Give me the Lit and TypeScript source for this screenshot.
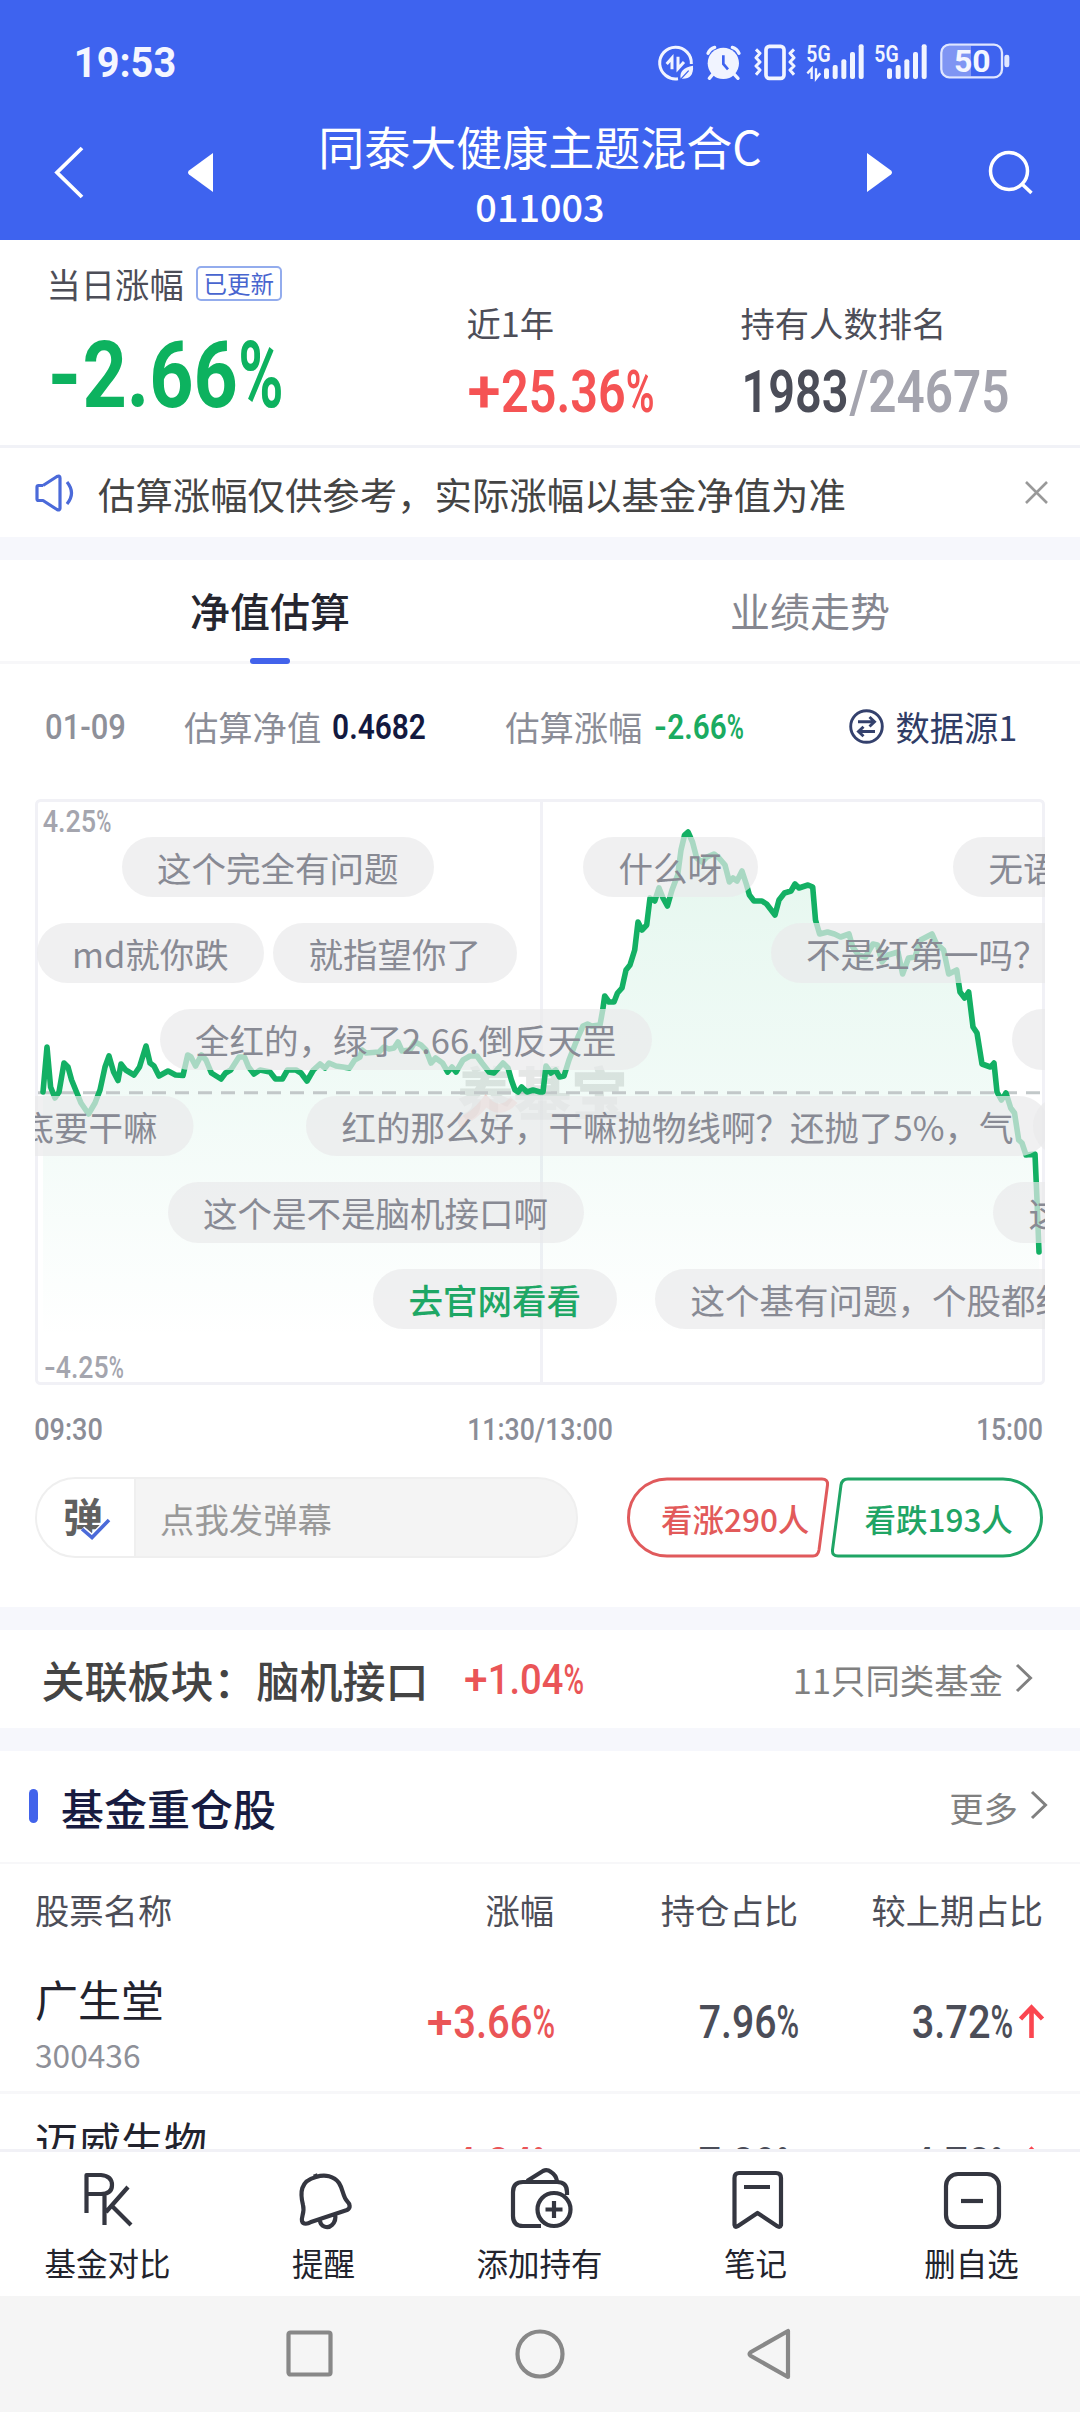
import { LitElement, html, svg, css } from "lit";
import { customElement } from "lit/decorators.js";

interface Run { s: string; x: number; w: number }

/** Splits a figure into sign, digits and percent mark, each fitted to its own share of the width. */
const runs = (text: string, w: number, cap: number): Run[] => {
  const sign = /^[+-]/.test(text) ? text[0] : "";
  const pct = text.endsWith("%") ? "%" : "";
  const signW = sign === "+" ? cap * 0.71 : sign ? cap * 0.44 : 0;
  const pctW = pct ? cap * 0.61 : 0;
  const bodyX = sign ? signW + cap * 0.09 : 0;
  const bodyW = w - bodyX - (pct ? pctW + cap * 0.08 : 0);
  const body = text.slice(sign.length, text.length - pct.length);
  const bear = cap * 0.038;
  const out: Run[] = [];
  if (sign) out.push({ s: sign, x: -bear, w: signW + bear * 2 });
  out.push({ s: body, x: bodyX - bear, w: bodyW + bear * 2 });
  if (pct) out.push({ s: pct, x: w - pctW - bear, w: pctW + bear * 2 });
  return out;
};

const figure = (text: string, x: number, y: number, w: number, cap: number, color: string, weight: number) => svg`<text y=${y} font-size=${cap / 0.711} font-weight=${weight} fill=${color}>${runs(text, w, cap).map((r) => svg`<tspan x=${x + r.x} textLength=${r.w} lengthAdjust="spacingAndGlyphs">${r.s}</tspan>`)}</text>`;

const num = (text: string, w: number, cap: number, color: string, weight = 500, cls = "") => html`
  <svg class="num ${cls}" width=${w} height=${cap} viewBox="0 0 ${w} ${cap}">${figure(text, 0, cap, w, cap, color, weight)}</svg>`;

const LINE: number[][] = [
  [43,1092],[47,1047],[50.6,1087],[55,1098],[59,1092],[64,1063],[68,1067],[71.6,1080],[76.5,1092],[81,1103],[88.5,1114],[95,1103],[100,1090],[105,1067],[109,1056],[113.6,1072],[118,1080.5],[121,1064],[125.7,1070],[134,1075],[139.5,1067],[146,1046],[150,1063],[154,1066],[159,1076],[168,1071],[175.6,1075],[183,1075.5],[187.7,1055],[191,1057],[195.6,1066],[201.4,1055],[206,1060],[211.4,1073],[221,1079],[225.5,1073],[230.7,1070],[239,1057],[244.5,1057],[248.6,1067],[254,1074],[260,1070],[270,1072],[275.5,1079],[282.4,1079],[287.5,1070],[296,1070],[301,1073],[307,1081],[313.4,1070],[320,1064],[325,1068],[329,1063],[336,1066],[349.5,1068],[354.7,1060],[360,1057],[362,1050],[366,1053],[379,1052],[384,1047],[389,1049],[394,1048],[398,1042],[402,1051],[410,1050],[415,1042],[421,1045],[426,1050],[431,1063],[435.6,1058],[442.5,1063],[447.7,1072],[452,1067],[456,1072],[463,1060],[470,1056],[477,1056],[482,1063],[489,1072],[494,1073],[503,1063],[508,1068],[511.4,1080],[515,1090],[518,1092],[521.7,1087],[527,1092],[533,1090],[540,1092],
  [543,1092],[546,1066],[551,1073],[555.5,1070],[559.6,1077],[564,1076],[569,1060],[578,1037],[583,1026],[587.5,1024],[591.6,1026],[600,1025],[602.7,1010],[604.7,996],[609,1002],[614,1002],[617.5,993],[622,988],[626,970],[630,965],[634.7,950],[638,922],[642,930],[646.7,925],[650,898],[654.7,901],[659,888],[663,898],[667.4,906],[672,890],[677.7,875],[681,850],[684.6,835],[688,832],[692.5,842],[696.7,858],[702,862],[707,857],[714,854],[719,858],[725,865],[729.4,882],[733,878],[737,881],[742,871],[746.6,885],[749.4,895],[754,901],[762,901],[766.6,904],[775,915],[779,900],[784.5,893],[791,891],[795,884],[799,888],[808,885],[812.7,887],[815.5,920],[819.6,934],[827.5,932],[834.4,934],[840.6,937],[849,934],[852.7,947],[858.5,955],[865.4,957],[873,944],[877.5,945],[882,962],[888,955],[898,952],[902.6,974],[908.5,958],[915,957],[920.5,940],[932,934],[936,943],[943.6,950],[948.7,974],[956.7,970],[960,992],[964.6,998],[968.7,992],[973,1027],[977,1033],[982,1064],[990.4,1067],[994,1063],[997,1092],[1001.4,1100],[1006,1093],[1010.7,1108],[1014.5,1113],[1018.7,1140],[1022,1143],[1026,1155],[1035,1154],[1037,1200],[1039,1252],
];
const linePts = LINE.map((p) => p.join(",")).join(" ");

interface Pill { x: number; row: number; text: string; hot?: boolean; end?: boolean }
const PILLS: Pill[] = [
  { x: 121.5, row: 0, text: "这个完全有问题" },
  { x: 583, row: 0, text: "什么呀" },
  { x: 953, row: 0, text: "无语了" },
  { x: 36.5, row: 1, text: "md就你跌" },
  { x: 273, row: 1, text: "就指望你了" },
  { x: 770.5, row: 1, text: "不是红第一吗？" },
  { x: 159.5, row: 2, text: "全红的，绿了2.66.倒反天罡" },
  { x: 1011.5, row: 2, text: "跌" },
  { x: 193, row: 3, text: "到底要干嘛", end: true },
  { x: 306, row: 3, text: "红的那么好，干嘛抛物线啊？还抛了5%，气" },
  { x: 1032.5, row: 3, text: "跌" },
  { x: 167.5, row: 4, text: "这个是不是脑机接口啊" },
  { x: 993, row: 4, text: "这个" },
  { x: 373, row: 5, text: "去官网看看", hot: true },
  { x: 655, row: 5, text: "这个基有问题，个股都红" },
];

const bars = (x: number, tops: number[]) => tops.map((t, i) => svg`<rect x=${x + i * 26} y=${t} width="15" height=${129 - t} rx="6" fill="#f1f4ff"/>`);

const ICONS = {
  pk: svg`<path d="M86.500 2213V2175H101Q112 2176 112 2185Q112 2194 101 2194H86.500M104.500 2195V2225M128 2187L106 2212M112 2206L131 2225"/>`,
  bell: svg`<path d="M316 2177C300 2181 300 2193 303 2205C305 2212 301 2217 302 2221C303 2225 308 2224 311 2222L347 2210C351 2208 350 2204 347 2201C343 2197 343 2189 339 2183C334 2176 325 2174 316 2177ZM316 2177L315 2174M320 2220C320 2227 328 2229 332 2225C335 2222 336 2218 335 2214"/>`,
  wallet: svg`<path d="M541 2226H523Q513 2226 513 2216V2192Q513 2182 523 2182H557Q567 2182 567 2192V2195M527 2181L543 2171Q547 2169 551 2172Q556 2175 557 2181"/><circle cx="554" cy="2209.500" r="16.500"/><path d="M554 2201V2218M545.500 2209.500H562.500"/>`,
  note: svg`<path d="M739 2173H776Q781 2173 781 2178V2225Q780 2228 777 2226L757.500 2213L738 2226Q735 2228 734.500 2225V2178Q734.500 2173 739 2173ZM744 2187H770"/>`,
  minus: svg`<rect x="946" y="2174" width="53" height="53" rx="12"/><path d="M961 2201H983"/>`,
};
const ACTIONS: [keyof typeof ICONS, string, number][] = [
  ["pk", "基金对比", 108], ["bell", "提醒", 324], ["wallet", "添加持有", 540], ["note", "笔记", 756], ["minus", "删自选", 972],
];

const chevron = () => html`<svg width="18" height="28" viewBox="0 0 18 28"><path d="M2 1L15.500 14L2 27" fill="none" stroke="#808080" stroke-width="3"/></svg>`;

const upArrow = html`<svg class="up" width="24" height="33" viewBox="0 0 24 33"><path d="M12.500 33V4M1.500 14L12.500 2.500L23.500 14" fill="none" stroke="#fb4650" stroke-width="4.600"/></svg>`;

@customElement("app-root")
export class AppRoot extends LitElement {
  static styles = css`
    :host { display: block; width: 1080px; height: 2412px; overflow: hidden; background: #fff; font-family: "Noto Sans CJK SC", sans-serif; }
    * { box-sizing: border-box; }
    svg { display: block; flex: none; overflow: visible; }
    .num text { font-family: Roboto, sans-serif; }
    .row { display: flex; align-items: center; }
    .grow { flex: 1; }
    span { white-space: nowrap; }

    .header { background: #3e63ef; height: 240px; color: #fff; }
    .status { height: 120px; padding: 36px 60px 0 75px; display: flex; justify-content: space-between; }
    .status .time { margin-top: 11px; }
    .nav { height: 120px; display: flex; padding-right: 46px; }
    .nav > svg { margin-top: 26px; }
    .nav .back { margin-left: 54px; }
    .nav .prev { margin-left: 104px; }
    .nav .search { margin-left: 96px; }
    .fund { flex: 1; display: flex; flex-direction: column; align-items: center; gap: 16px; }
    .fund .name { font-size: 46px; line-height: 50px; }
    .fund .code { font-size: 37.800px; line-height: 40px; font-weight: 500; }

    .stats { height: 208px; display: grid; grid-template-columns: 420px 274px 1fr; padding-left: 46.500px; border-bottom: 3px solid #f1f2f7; color: #4d4e58; font-size: 34.300px; line-height: 34px; }
    .stat { padding-top: 65px; }
    .stat.main { padding-top: 26px; }
    .stat .num { margin: 31px 0 0 2px; }
    .stat.main .num { margin: 41px 0 0 3.500px; }
    .stat .pair { display: flex; gap: 4px; }
    .stat .pair .num + .num { margin-left: 0; }
    .badge { margin-left: 12px; width: 86px; height: 35px; margin-bottom: -1px; border: 2px solid #93aced; border-radius: 5px; color: #4865cf; font-size: 23.500px; line-height: 30px; text-align: center; }
    .stat.main .row { height: 34px; }

    .notice { height: 89px; padding: 0 32px 0 35px; font-size: 37.400px; color: #444; }
    .notice span { margin-left: 23px; padding-top: 2px; }
    .band { height: 23px; background: #f6f7fc; }

    .tabs { height: 104px; display: grid; grid-template-columns: 1fr 1fr; box-shadow: inset 0 -3px #f7f7f9; }
    .tab { display: flex; flex-direction: column; align-items: center; font-size: 40px; line-height: 96px; padding-top: 2px; color: #85868f; }
    .tab.on { color: #25262f; font-weight: 500; }
    .tab i { width: 40px; height: 6px; border-radius: 3px; background: #4263eb; }

    .info { height: 124px; margin-bottom: 11px; padding-left: 46px; font-size: 34.300px; color: #8b8d97; }
    .info .l1 { margin-left: 59px; }
    .info .n1 { margin-left: 12px; }
    .info .l2 { margin-left: 80px; }
    .info .n2 { margin-left: 13px; }
    .info .swap { margin-left: 106px; }
    .info .src { margin-left: 11px; color: #2f3c66; }

    .chart { position: relative; margin: 0 35px; width: 1010px; height: 586px; overflow: hidden; }
    .chart text { font-family: Roboto, sans-serif; }
    .chart .mark { font-family: "Noto Sans CJK SC", sans-serif; font-weight: 900; }
    .pill { position: absolute; height: 60.500px; line-height: 61.500px; padding: 0 35.500px; border-radius: 31px; background: rgba(234, 234, 235, 0.7); color: #888a94; font-size: 34.500px; white-space: nowrap; }
    .pill.end { transform: translateX(-100%); }
    .pill.hot { color: #1ea765; font-weight: 500; }

    .times { display: flex; justify-content: space-between; padding: 33px 38px 0 35px; }
    .act { display: flex; padding: 37px 35px 49px; height: 167px; }
    .input { width: 543px; height: 81px; border: 2px solid #efefef; border-radius: 41px; background: #f4f4f4; display: flex; overflow: hidden; color: #999; font-size: 34.400px; line-height: 78px; }
    .toggle { width: 99px; background: #fff; border-right: 2px solid #efefef; display: flex; align-items: center; justify-content: center; position: relative; }
    .toggle b { font-size: 40px; font-weight: 700; color: #606060; line-height: 70px; margin: -5px 5px 0 0; }
    .toggle svg { position: absolute; left: 43px; top: 39px; }
    .input span { margin-left: 24px; }
    .vote { position: relative; width: 204px; height: 81px; font-size: 31.500px; line-height: 82px; font-weight: 500; }
    .vote svg { position: absolute; left: 0; top: 0; }
    .vote.rise { margin-left: 47.500px; padding-left: 35.500px; color: #e25a5a; }
    .vote.fall { width: 214px; padding-left: 34.500px; color: #1fa565; margin-left: 0.500px; }

    .related { height: 98px; padding: 0 47px 0 41.500px; }
    .related .t { font-size: 43px; font-weight: 500; color: #444; margin-right: 36.500px; }
    .more { font-size: 34.400px; color: #808080; }
    .more + svg { margin-left: 12px; margin-top: -3px; }
    .title { height: 113px; padding: 0 32px 0 28.500px; border-bottom: 2px solid #f7f7f9; }
    .title i { width: 9px; height: 34px; border-radius: 5px; background: #4263eb; margin-top: -1px; }
    .title .t { font-size: 43px; font-weight: 500; color: #181c41; margin-left: 23.500px; }

    .grid { display: grid; grid-template-columns: 240px 279px 244px 245px; padding: 0 37px 0 35px; align-items: center; justify-items: end; }
    .grid > :first-child { justify-self: start; }
    .thead { height: 88px; padding-top: 2px; font-size: 34.300px; color: #4d4e58; }
    .list { height: 197px; overflow: hidden; }
    .stock { height: 142px; border-bottom: 3px solid #f7f7f9; }
    .stock .who { display: flex; flex-direction: column; height: 139px; padding-top: 21px; }
    .stock .who .n { font-size: 43px; line-height: 50px; color: #22232e; }
    .stock .who .c { font-size: 31.700px; line-height: 40px; margin-top: 11px; color: #8e9098; }
    .stock .chg { display: flex; gap: 7px; }

    .bottom { height: 147px; border-top: 3px solid #f1f1f6; display: grid; grid-template-columns: repeat(5, 1fr); background: #fff; }
    .item { display: flex; flex-direction: column; align-items: center; padding-top: 16px; font-size: 31.500px; color: #22232d; }
    .item svg { fill: none; stroke: #343640; stroke-width: 4.200; stroke-linejoin: round; }
    .item span { line-height: 40px; margin: 8px 1px 0 0; }
    .sys { height: 116px; background: #f5f5f5; display: flex; justify-content: center; align-items: center; gap: 182px; }
    .sys svg { fill: none; stroke: #888; stroke-width: 4.200; stroke-linejoin: round; }
    .sys .recent { position: relative; left: -1.500px; }
  `;

  private statusIcons() {
    return html`<svg width="370" height="54" viewBox="0 0 1110 162">
      <g fill="none" stroke="#f1f4ff" stroke-width="9">
        <path d="M124 84A47.500 47.500 0 1 0 84 128"/>
        <path d="M50 84L66 66V100M84 62V98L102 78" stroke-width="9"/>
        <path d="M92 128Q86 96 129 89Q132 128 98 128Z" fill="#f1f4ff" stroke="none"/>
        <path d="M88 134L116 104" stroke="#3e63ef" stroke-width="4"/>
        <path d="M174 52Q180 38 194 34M267 52Q261 38 247 34" stroke-width="10" stroke-linecap="round"/>
        <path d="M188 115L178 127M253 115L264 127" stroke-width="10" stroke-linecap="round"/>
      </g>
      <circle cx="220" cy="82" r="47" fill="#f1f4ff"/>
      <path d="M220 58V84L234 100" fill="none" stroke="#3e63ef" stroke-width="8"/>
      <g fill="none" stroke="#f1f4ff" stroke-width="9" stroke-linejoin="round">
        <rect x="348" y="31" width="54" height="96" rx="10" stroke-width="11"/>
        <path d="M318 40L330 52L318 65L330 78L318 90L330 102L318 116M432 40L420 52L432 65L420 78L432 90L420 102L432 116"/>
      </g>
      <g fill="#f1f4ff" font-family="Roboto, sans-serif" font-weight="600">
        <text x="469" y="77" font-size="72" textLength="73" lengthAdjust="spacingAndGlyphs">5G</text>
        <text x="673" y="77" font-size="72" textLength="73" lengthAdjust="spacingAndGlyphs">5G</text>
      </g>
      <path d="M472 112L485 98V129M498 97V128L511 112" fill="none" stroke="#f1f4ff" stroke-width="7"/>
      ${bars(522, [97, 87, 70, 48, 25])}
      ${bars(711, [97, 87, 70, 48, 25])}
      <path d="M892 29H963V121H892Q877 121 877 106V44Q877 29 892 29Z" fill="#7f95f3"/>
      <rect x="874" y="26" width="182" height="98" rx="24" fill="none" stroke="#dfe6ff" stroke-width="7"/>
      <rect x="1063" y="56" width="15" height="38" rx="7" fill="#dfe6ff"/>
      <text x="912" y="108" font-family="Roboto, sans-serif" font-weight="700" font-size="94" fill="#f4f6ff" textLength="110" lengthAdjust="spacingAndGlyphs">50</text>
    </svg>`;
  }

  private chart() {
    return html`<div class="chart">
      <svg width="1010" height="586" viewBox="35 799 1010 586">
        <defs><linearGradient id="fade" gradientUnits="userSpaceOnUse" x1="0" y1="830" x2="0" y2="1340">
          <stop offset="0" stop-color="#0fb463" stop-opacity="0.110"/>
          <stop offset="0.550" stop-color="#0fb473" stop-opacity="0.055"/>
          <stop offset="1" stop-color="#0fb473" stop-opacity="0"/>
        </linearGradient></defs>
        <path d="M541.500 800V1384" stroke="#f1f1f6" stroke-width="3"/>
        <polygon points="43,1340 ${linePts} 1039,1340" fill="url(#fade)"/>
        <text class="mark" x="457" y="1115" font-size="57" fill="#6e7a74" fill-opacity="0.180">养基宝</text>
        <path d="M458 1123Q474 1117 486 1101Q500 1116 514 1100" fill="none" stroke="#f05a50" stroke-opacity="0.240" stroke-width="9"/>
        <path d="M37 1092.700H1043" stroke="#c2c8c9" stroke-width="3" stroke-dasharray="14 9"/>
        <polyline points=${linePts} fill="none" stroke="#13b064" stroke-width="5.600" stroke-linejoin="round" stroke-linecap="round"/>
        <rect x="36.500" y="800.500" width="1007" height="583" rx="4" fill="none" stroke="#f1f1f6" stroke-width="3"/>
        ${figure("4.25%", 43.5, 832, 67, 22, "#a4a5ae", 500)}
        ${figure("-4.25%", 45, 1378, 78, 22, "#a4a5ae", 500)}
      </svg>
      ${PILLS.map((p) => html`<div class="pill ${p.hot ? "hot" : ""} ${p.end ? "end" : ""}" style="left:${p.x - 35}px;top:${37.5 + p.row * 86.4}px">${p.text}</div>`)}
    </div>`;
  }

  private stock(name: string, code: string, a: [string, number], b: [string, number], c: [string, number]) {
    return html`<div class="grid stock">
      <div class="who"><span class="n">${name}</span><span class="c">${code}</span></div>
      ${num(a[0], a[1], 33, "#ea5557", 500)}
      ${num(b[0], b[1], 33, "#4b4d58", 500)}
      <div class="chg">${num(c[0], c[1], 33, "#4b4d58", 500)}${upArrow}</div>
    </div>`;
  }

  render() {
    return html`
      <div class="header">
        <div class="status">${num("19:53", 100, 30, "#f4f6ff", 700, "time")}${this.statusIcons()}</div>
        <div class="nav">
          <svg class="back" width="30" height="53" viewBox="0 0 30 53"><path d="M28 2L3 26.500L28 51" fill="none" stroke="#fff" stroke-width="3.800"/></svg>
          <svg class="prev" width="25" height="53" viewBox="0 0 25 53"><path d="M25 7V46L1 28.500Q-1 26.500 1 24.500Z" fill="#fff"/></svg>
          <div class="fund"><span class="name">同泰大健康主题混合C</span><span class="code">011003</span></div>
          <svg class="next" width="25" height="53" viewBox="0 0 25 53"><path d="M0 7V46L24 28.500Q26 26.500 24 24.500Z" fill="#fff"/></svg>
          <svg class="search" width="46" height="53" viewBox="0 0 46 53"><g fill="none" stroke="#fff" stroke-width="3.500"><circle cx="21" cy="25" r="18.500"/><path d="M34 38L43.500 47"/></g></svg>
        </div>
      </div>

      <div class="stats">
        <div class="stat main">
          <div class="row"><span>当日涨幅</span><span class="badge">已更新</span></div>
          ${num("-2.66%", 231, 66, "#0db25f", 700)}
        </div>
        <div class="stat">近1年${num("+25.36%", 184, 42, "#f55354", 600)}</div>
        <div class="stat">持有人数排名
          <div class="pair">${num("1983", 104, 42, "#4b4d58", 600)}${num("/24675", 157, 42, "#a4a4ae", 600)}</div>
        </div>
      </div>

      <div class="row notice">
        <svg width="40" height="38" viewBox="0 0 40 38"><g fill="none" stroke="#4b6ad9" stroke-width="3.200" stroke-linejoin="round"><path d="M8 11.500H3.500Q2 11.500 2 13V25Q2 26.500 3.500 26.500H8L22 35.500Q25 37 25 34V4Q25 1 22 2.500L8 11.500"/><path d="M32 8Q41 19 32 30"/></g></svg>
        <span>估算涨幅仅供参考，实际涨幅以基金净值为准</span>
        <div class="grow"></div>
        <svg width="23" height="23" viewBox="0 0 23 23"><path d="M1 1L22 22M22 1L1 22" stroke="#999" stroke-width="2.600"/></svg>
      </div>
      <div class="band"></div>

      <div class="tabs"><div class="tab on">净值估算<i></i></div><div class="tab">业绩走势</div></div>
      <div class="row info">
        ${num("01-09", 79, 25, "#8e9099")}
        <span class="l1">估算净值</span>${num("0.4682", 92, 25, "#13193f", 600, "n1")}
        <span class="l2">估算涨幅</span>${num("-2.66%", 88, 25, "#1aab61", 600, "n2")}
        <svg class="swap" width="35" height="35" viewBox="0 0 35 35"><g fill="none" stroke="#34416d" stroke-width="2.900"><circle cx="17.500" cy="17.500" r="15.800"/><path d="M9 12.800H25.500M20.500 8L25.500 12.800L20.500 17.500M26 22.500H9.500M14.500 17.800L9.500 22.500L14.500 27.200"/></g></svg>
        <span class="src">数据源1</span>
      </div>

      ${this.chart()}
      <div class="times">${num("09:30", 67, 22, "#8b8d97")}${num("11:30/13:00", 144, 22, "#8b8d97")}${num("15:00", 65, 22, "#8b8d97")}</div>
      <div class="act">
        <div class="input">
          <div class="toggle"><b>弹</b><svg width="32" height="22" viewBox="0 0 32 22"><path d="M2 11L12 19.500L29 2" fill="none" stroke="#fff" stroke-width="6.500"/><path d="M2 11L12 19.500L29 2" fill="none" stroke="#4b6ad9" stroke-width="3.600"/></svg></div>
          <span>点我发弹幕</span>
        </div>
        <div class="vote rise"><svg width="204" height="81" viewBox="0 0 204 81"><path d="M41 2H196Q202 2 201.500 8L193 73Q192 79 187 79H41A38.500 38.500 0 0 1 41 2Z" fill="none" stroke="#e05a5c" stroke-width="3"/></svg>看涨290人</div>
        <div class="vote fall"><svg width="214" height="81" viewBox="0 0 214 81"><path d="M173 2H18Q12 2 11 8L2.500 73Q2 79 8 79H173A38.500 38.500 0 0 0 173 2Z" fill="none" stroke="#1fa565" stroke-width="3"/></svg>看跌193人</div>
      </div>
      <div class="band"></div>

      <div class="row related">
        <span class="t">关联板块：脑机接口</span>${num("+1.04%", 118, 30, "#ea5557", 500)}
        <div class="grow"></div><span class="more">11只同类基金</span>${chevron()}
      </div>
      <div class="band"></div>
      <div class="row title"><i></i><span class="t">基金重仓股</span><div class="grow"></div><span class="more">更多</span>${chevron()}</div>
      <div class="grid thead"><span>股票名称</span><span>涨幅</span><span>持仓占比</span><span>较上期占比</span></div>
      <div class="list">
        ${this.stock("广生堂", "300436", ["+3.66%", 126], ["7.96%", 98], ["3.72%", 99])}
        ${this.stock("迈威生物", "688062", ["+4.84%", 126], ["7.89%", 98], ["4.78%", 99])}
      </div>

      <div class="bottom">
        ${ACTIONS.map(([icon, label, cx]) => html`<div class="item"><svg width="66" height="66" viewBox="${cx - 33} 2168 66 66">${ICONS[icon]}</svg><span>${label}</span></div>`)}
      </div>
      <div class="sys">
        <svg class="recent" width="46" height="48" viewBox="0 0 46 48"><rect x="2.500" y="2.500" width="42" height="42" rx="2"/></svg>
        <svg width="50" height="50" viewBox="0 0 50 50"><circle cx="25" cy="25" r="22.500"/></svg>
        <svg width="46" height="50" viewBox="0 0 46 50"><path d="M41 2V48L4 27Q1 25 4 23Z"/></svg>
      </div>
    `;
  }
}
